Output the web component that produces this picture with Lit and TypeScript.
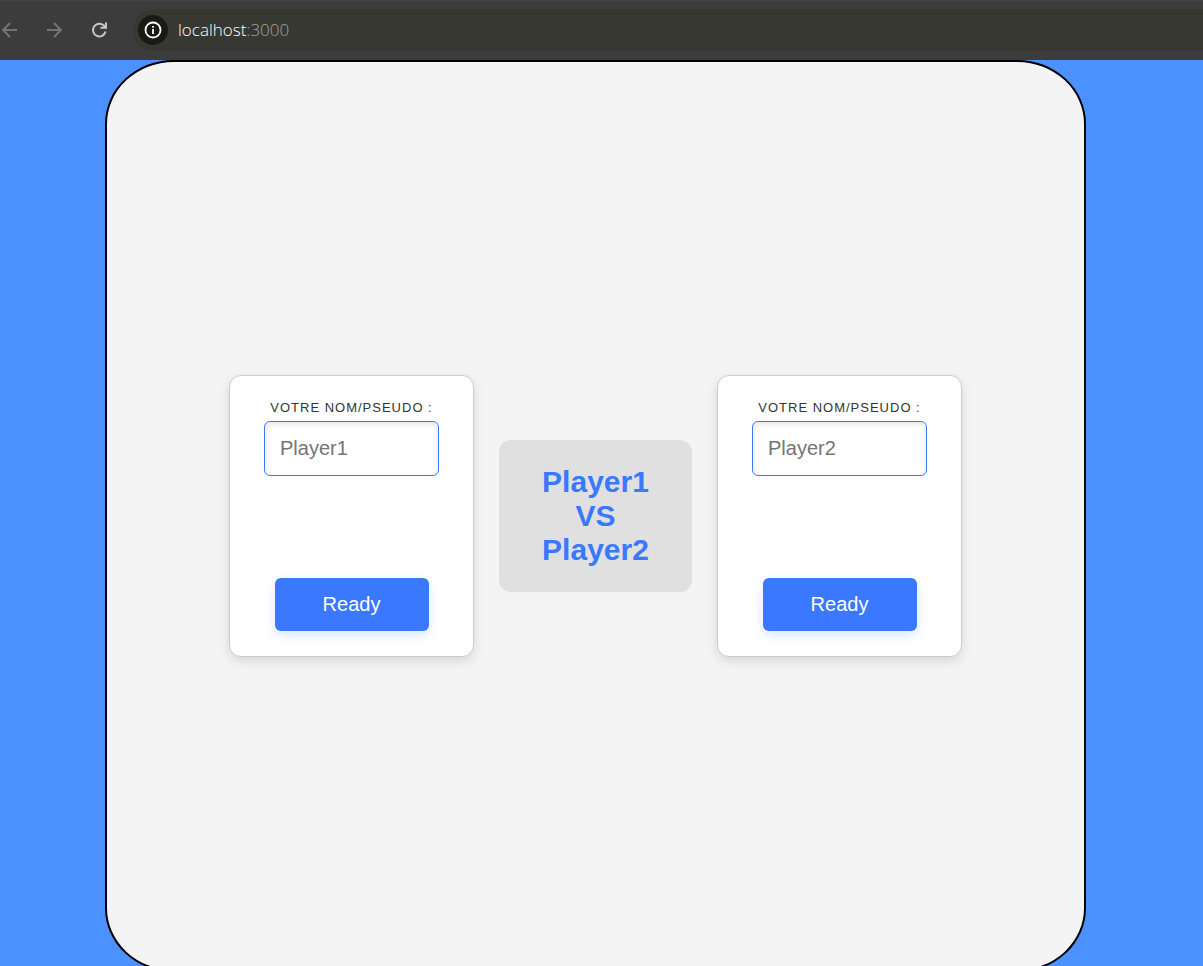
import { LitElement, html, css } from "lit";
import { customElement, property, state } from "lit/decorators.js";

@customElement("browser-bar")
class BrowserBar extends LitElement {
  static styles = css`
    :host {
      display: block;
      background: #3c3c3c;
      box-shadow: inset 0 1px #434343;
    }
    .bar {
      display: flex;
      align-items: center;
      height: 60px;
      font-family: "Open Sans", "Noto Sans", sans-serif;
    }
    .nav {
      display: flex;
      gap: 25px;
    }
    button {
      all: unset;
      display: block;
      width: 20px;
      height: 20px;
      color: #c7c7c7;
    }
    button:disabled {
      color: #757575;
    }
    svg {
      display: block;
    }
    .address {
      flex: 1;
      display: flex;
      align-items: center;
      gap: 10px;
      height: 42px;
      box-sizing: border-box;
      margin-left: 23px;
      padding-left: 5px;
      border-radius: 21px 0 0 21px;
      background: #373832;
    }
    .address .info {
      display: grid;
      place-items: center;
      width: 30px;
      height: 30px;
      border-radius: 50%;
      background: #191a15;
      color: #fff;
    }
    .url {
      font-size: 17px;
      font-weight: 300;
      line-height: 24px;
      color: #a4a4a1;
    }
    .host {
      color: #fff;
    }
  `;

  render() {
    return html`
      <div class="bar">
        <nav class="nav">
          <button disabled aria-label="Back">
            <svg width="20" height="20" viewBox="0 0 20 20" fill="none" stroke="currentColor" stroke-width="1.8">
              <path d="M17 10H3.2M10 3L3 10l7 7" />
            </svg>
          </button>
          <button disabled aria-label="Forward">
            <svg width="20" height="20" viewBox="0 0 20 20" fill="none" stroke="currentColor" stroke-width="1.8">
              <path d="M2 10h13.8M9 3l7 7-7 7" />
            </svg>
          </button>
          <button aria-label="Reload">
            <svg width="20" height="20" viewBox="0 0 20 20" fill="none" stroke="currentColor" stroke-width="2">
              <path d="M15.6 11.6a6.4 6.4 0 1 1-1.8-6.2L15.6 7.2M16 2.4v5.4h-5.6" />
            </svg>
          </button>
        </nav>
        <div class="address">
          <button class="info" aria-label="Site information">
            <svg width="18" height="18" viewBox="0 0 18 18" fill="none" stroke="currentColor" stroke-width="1.8">
              <circle cx="9" cy="9" r="7.5" />
              <path d="M9 8v5M9 5v1.8" />
            </svg>
          </button>
          <span class="url"><span class="host">localhost</span>:3000</span>
        </div>
      </div>
    `;
  }
}

@customElement("player-card")
class PlayerCard extends LitElement {
  @property() name = "";

  static styles = css`
    :host {
      display: block;
    }
    .card {
      display: flex;
      flex-direction: column;
      align-items: center;
      justify-content: space-between;
      box-sizing: border-box;
      width: 245px;
      min-height: 282px;
      padding: 23px 34px 25px;
      border: 1px solid #ccc;
      border-radius: 12px;
      background: #fff;
      box-shadow: 0 4px 12px rgba(0, 0, 0, 0.12);
      font-family: "Liberation Sans", Arial, sans-serif;
    }
    .field {
      display: flex;
      flex-direction: column;
      align-items: center;
      gap: 4px;
    }
    label {
      font-size: 13px;
      line-height: 18px;
      letter-spacing: 1px;
      text-transform: uppercase;
      white-space: nowrap;
      color: #333;
    }
    input {
      box-sizing: border-box;
      width: 175px;
      height: 55px;
      padding: 0 15px;
      border: 1px solid #3a78ff;
      border-radius: 6px;
      background: #fff;
      box-shadow: inset 0 2px 5px rgba(0, 0, 0, 0.1);
      font: 20px "Liberation Sans", Arial, sans-serif;
    }
    input::placeholder {
      color: #757575;
    }
    button {
      width: 154px;
      height: 53px;
      padding: 0;
      border: 0;
      border-radius: 6px;
      background: #3a78ff;
      box-shadow: 0 4px 12px rgba(58, 120, 255, 0.2);
      font: 20px "Liberation Sans", Arial, sans-serif;
      color: #fff;
    }
  `;

  render() {
    return html`
      <form class="card" @submit=${(e: Event) => e.preventDefault()}>
        <div class="field">
          <label for="name">Votre nom/pseudo :</label>
          <input id="name" type="text" placeholder=${this.name} />
        </div>
        <button type="submit">Ready</button>
      </form>
    `;
  }
}

@customElement("app-root")
class AppRoot extends LitElement {
  @state() players = ["Player1", "Player2"];

  static styles = css`
    :host {
      display: flex;
      flex-direction: column;
      height: 100vh;
      overflow: hidden;
      background: #4b91ff;
    }
    browser-bar {
      flex: none;
    }
    .page {
      flex: 1;
      display: flex;
      padding: 0 117px 0 105px;
    }
    .board {
      flex: 1;
      display: flex;
      align-items: center;
      justify-content: center;
      gap: 25px;
      margin-bottom: -6px;
      border: 2px solid #000;
      border-radius: 7%;
      background: #f4f4f4;
    }
    .versus {
      box-sizing: border-box;
      min-width: 193px;
      padding: 25px;
      border-radius: 12px;
      background: #e0e0e0;
      font: bold 30px/34px "Liberation Sans", Arial, sans-serif;
      text-align: center;
      color: #3a78ff;
    }
  `;

  render() {
    const [first, second] = this.players;
    return html`
      <browser-bar></browser-bar>
      <main class="page">
        <section class="board">
          <player-card name=${first}></player-card>
          <div class="versus">
            <div>${first}</div>
            <div>VS</div>
            <div>${second}</div>
          </div>
          <player-card name=${second}></player-card>
        </section>
      </main>
    `;
  }
}
